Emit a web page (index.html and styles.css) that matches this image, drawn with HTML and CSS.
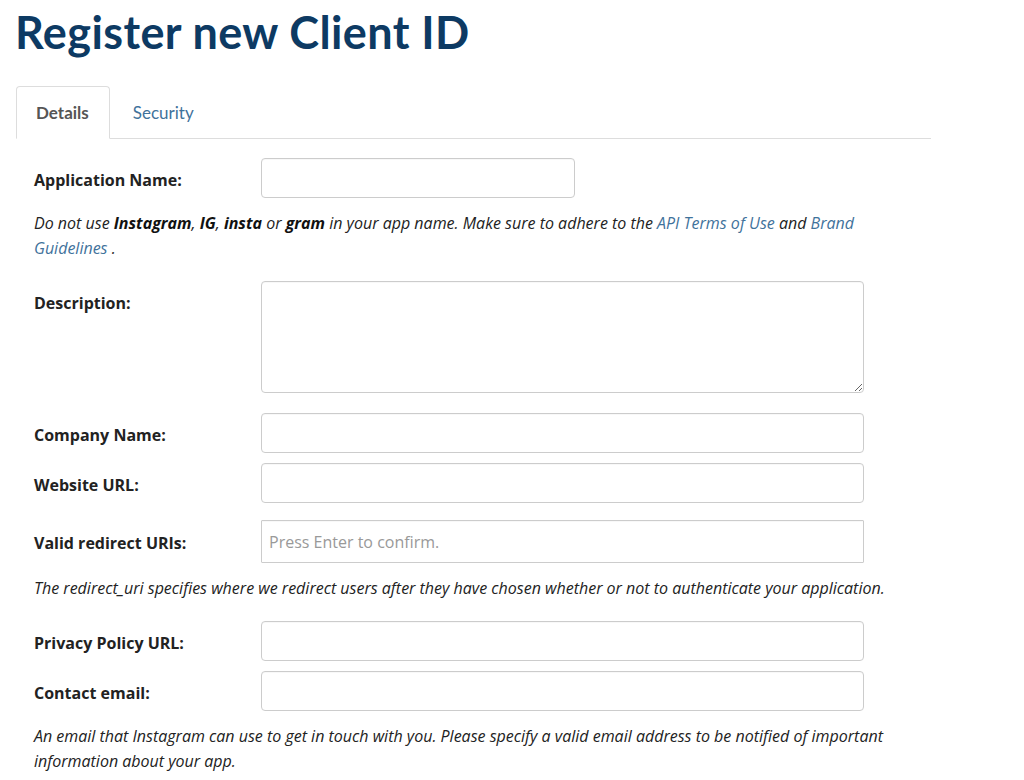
FILE: index.html
```html
<!DOCTYPE html>
<html lang="en">
<head>
<meta charset="utf-8">
<title>Register new Client ID</title>
<link rel="stylesheet" href="styles.css">
</head>
<body>
<div class="page">
  <h1 class="title">Register new Client ID</h1>
  <ul class="tabs">
    <li class="tab active">Details</li>
    <li class="tab"><a href="#">Security</a></li>
  </ul>
  <form class="form">
    <div class="row">
      <label class="label">Application Name:</label>
      <input class="input short" type="text">
    </div>
    <p class="help">Do not use <b>Instagram</b>, <b>IG</b>, <b>insta</b> or <b>gram</b> in your app name. Make sure to adhere to the <a href="#">API Terms of Use</a> and <a href="#">Brand Guidelines</a> .</p>
    <div class="row row-gap">
      <label class="label">Description:</label>
      <textarea class="input textarea"></textarea>
    </div>
    <div class="row">
      <label class="label">Company Name:</label>
      <input class="input" type="text">
    </div>
    <div class="row row-redirect">
      <label class="label">Website URL:</label>
      <input class="input" type="text">
    </div>
    <div class="row">
      <label class="label label-tall">Valid redirect URIs:</label>
      <input class="input tags" type="text" placeholder="Press Enter to confirm.">
    </div>
    <p class="help">The redirect_uri specifies where we redirect users after they have chosen whether or not to authenticate your application.</p>
    <div class="row">
      <label class="label">Privacy Policy URL:</label>
      <input class="input" type="text">
    </div>
    <div class="row">
      <label class="label">Contact email:</label>
      <input class="input" type="text">
    </div>
    <p class="help">An email that Instagram can use to get in touch with you. Please specify a valid email address to be notified of important information about your app.</p>
  </form>
</div>
</body>
</html>
```

FILE: styles.css
```css
html, body {
  margin: 0;
  padding: 0;
  background: #fff;
}
body {
  font-family: "Open Sans", Lato, Arial, sans-serif;
  color: #222;
}
.page {
  width: 915px;
  padding-left: 16px;
}
.title {
  margin: 0;
  padding-top: 6px;
  font-family: Lato, "Open Sans", Arial, sans-serif;
  font-size: 45px;
  line-height: 52px;
  font-weight: 700;
  color: #0d3a63;
  margin-left: -1px;
  letter-spacing: 0.4px;
}
.tabs {
  list-style: none;
  margin: 28px 0 0 0;
  padding: 0;
  display: flex;
  border-bottom: 1px solid #ddd;
}
.tab {
  padding: 0 20px 0 19px;
  height: 51px;
  line-height: 51px;
  font-family: Lato, "Open Sans", Arial, sans-serif;
  font-size: 17px;
  margin-bottom: -1px;
  border: 1px solid transparent;
  border-radius: 4px 4px 0 0;
}
.tab a {
  color: #3f729b;
  text-decoration: none;
}
.tab.active {
  font-weight: 700;
  color: #555;
  border-color: #ddd;
  border-bottom-color: #fff;
  background: #fff;
  margin-right: 3px;
}
.form {
  padding: 19px 18px 0 18px;
}
.row {
  display: flex;
  align-items: flex-start;
  margin-bottom: 10px;
}
.row-gap {
  margin-bottom: 20px;
}
.row-redirect {
  margin-bottom: 17px;
}
.label {
  width: 227px;
  flex: none;
  font-weight: 700;
  font-size: 16px;
  height: 40px;
  line-height: 44px;
  color: #222;
}
.label-tall {
  height: 43px;
  line-height: 47px;
}
.input {
  box-sizing: border-box;
  width: 603px;
  height: 40px;
  border: 1px solid #ccc;
  border-radius: 4px;
  box-shadow: inset 0 1px 1px rgba(0,0,0,0.03);
  font-family: inherit;
  font-size: 16px;
  padding: 0 7px;
  background: #fff;
  margin: 0;
}
.short {
  width: 314px;
}
.textarea {
  height: 112px;
  resize: vertical;
  display: block;
}
.tags {
  height: 43px;
  border-radius: 1px;
}
.tags::placeholder {
  color: #999;
}
.help {
  margin: 13px 0 20px 0;
  font-style: italic;
  font-size: 16px;
  line-height: 25px;
  color: #222;
}
.help b {
  font-weight: 700;
  color: #111;
}
.help a {
  color: #3f729b;
  text-decoration: none;
}
```
